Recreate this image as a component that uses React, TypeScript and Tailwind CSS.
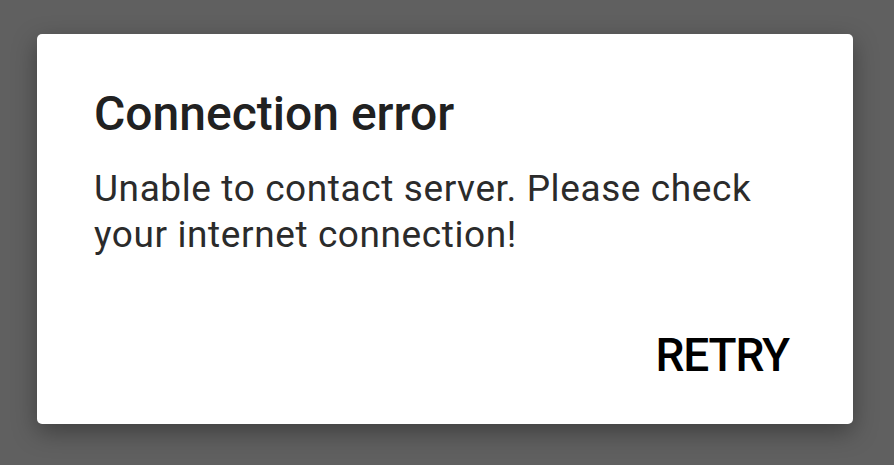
export default function App() {
  return (
    <div
      className="w-[894px] h-[465px] bg-[#606060] pt-[34px] pl-[37px]"
      style={{ fontFamily: "Roboto, 'Liberation Sans', sans-serif" }}
    >
      <div className="w-[816px] h-[390px] bg-white rounded-[5px] shadow-[0_8px_24px_rgba(0,0,0,0.35)] flex flex-col pt-[52px] pl-[57px] pr-[65px]">
        <h1 className="text-[48px] leading-[56px] font-medium text-[#212121]">
          Connection error
        </h1>
        <p className="mt-[24px] text-[37px] leading-[46px] tracking-[0.6px] text-[#2b2b2b]">
          Unable to contact server. Please check
          <br />
          your internet connection!
        </p>
        <div className="mt-[69px] flex justify-end">
          <button className="text-[46px] leading-[56px] font-medium text-black tracking-[-1.2px] mr-[-1px]">
            RETRY
          </button>
        </div>
      </div>
    </div>
  );
}
